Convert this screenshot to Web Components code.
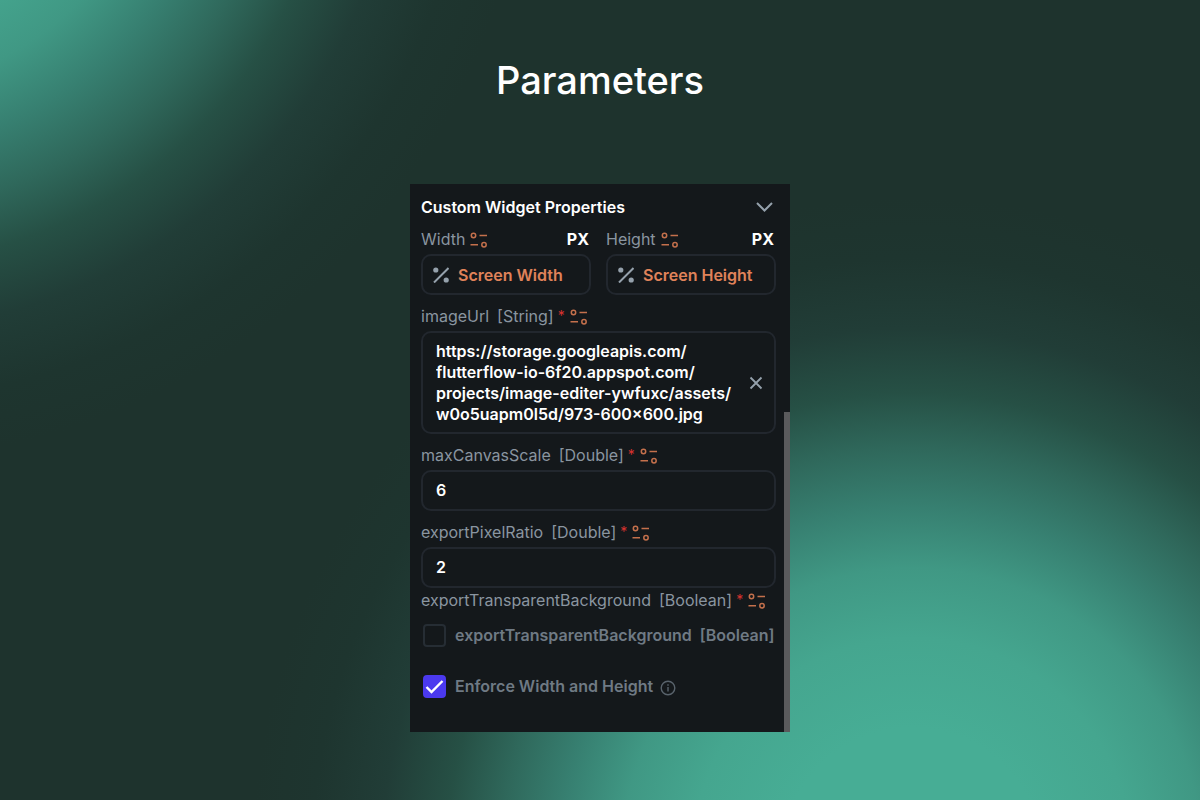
<!DOCTYPE html>
<html lang="en">
<head>
<meta charset="utf-8">
<title>Parameters</title>
<style>
  html, body { margin: 0; min-height: 100%; }
  body { background: #1e332d; font-family: Inter, "Liberation Sans", sans-serif; }
</style>
</head>
<body>
<param-stage>
  <span slot="title">Parameters</span>
  <prop-panel heading="Custom Widget Properties">
    <prop-pair>
      <size-field label="Width" unit="PX">Screen Width</size-field>
      <size-field label="Height" unit="PX">Screen Height</size-field>
    </prop-pair>
    <text-field name="imageUrl" type="String" multiline value="https://storage.googleapis.com/&#10;flutterflow-io-6f20.appspot.com/&#10;projects/image-editer-ywfuxc/assets/&#10;w0o5uapm0l5d/973-600x600.jpg"></text-field>
    <text-field name="maxCanvasScale" type="Double" value="6"></text-field>
    <text-field name="exportPixelRatio" type="Double" value="2"></text-field>
    <prop-label required>exportTransparentBackground<span slot="type">[Boolean]</span></prop-label>
    <check-field label="exportTransparentBackground" type="[Boolean]"></check-field>
    <check-field label="Enforce Width and Height" checked info></check-field>
  </prop-panel>
</param-stage>

<script>
const define = (name, render) => customElements.define(name, class extends HTMLElement {
  connectedCallback() {
    if (this.shadowRoot) return;
    this.attachShadow({ mode: 'open' }).innerHTML = render(this);
  }
});

define('param-stage', () => `
  <style>
    :host {
      --c0: #47ad95; --c1: #45a68f; --c2: #409884; --c3: #378071; --c4: #2f685b;
      --c5: #265045; --c6: #213d37; --c7: #1e352f;
      display: block; box-sizing: border-box; min-height: 100vh; padding: 56px 16px;
      background:
        radial-gradient(circle at -130px -200px, var(--c0) 130px, var(--c1) 220px, var(--c2) 290px, var(--c3) 350px, var(--c4) 410px, var(--c5) 465px, var(--c6) 530px, var(--c7) 600px, transparent 660px),
        radial-gradient(circle at 76% calc(100% + 58px), var(--c0) 130px, var(--c1) 220px, var(--c2) 290px, var(--c3) 350px, var(--c4) 410px, var(--c5) 465px, var(--c6) 530px, var(--c7) 600px, transparent 660px),
        #1e332d;
    }
    main { display: flex; flex-direction: column; align-items: center; gap: 80px; }
    h1 { margin: 0; font-size: 38px; line-height: 48px; font-weight: 500; color: #fff; }
  </style>
  <main><h1><slot name="title"></slot></h1><slot></slot></main>`);

define('prop-panel', el => `
  <style>
    :host { display: block; position: relative; box-sizing: border-box; width: 100%; max-width: 380px;
      padding: 7px 14px 34px 11px; background: #14181b; }
    header { display: flex; align-items: center; justify-content: space-between; height: 32px; margin-bottom: 4px; }
    h2 { margin: 0; font-size: 16px; font-weight: 600; color: #fff; white-space: nowrap; }
    button { border: 0; padding: 0; background: none; display: flex; }
    .body { display: flex; flex-direction: column; }
    .thumb { position: absolute; right: 0; bottom: 0; width: 6px; height: 320px; background: #5a5a5c; }
  </style>
  <header><h2>${el.getAttribute('heading')}</h2>
    <button aria-label="Collapse"><svg width="22" height="16" viewBox="0 0 22 16" fill="none" stroke="#95a1ac" stroke-width="2"><path d="M3 4l7.500 7.500L18 4"/></svg></button>
  </header>
  <div class="body"><slot></slot></div>
  <div class="thumb"></div>`);

define('prop-pair', () => `
  <style>:host { display: grid; grid-template-columns: 1fr 1fr; gap: 15px; }</style><slot></slot>`);

define('bind-icon', () => `
  <style>:host { display: flex; }</style>
  <svg width="18" height="16" viewBox="0 0 18 16" fill="none" stroke="#c4704c" stroke-width="1.500">
    <circle cx="3.500" cy="3.500" r="2.200"/><path d="M9.500 3.500H17M.5 12.800H8"/><circle cx="14" cy="12.800" r="2.200"/>
  </svg>`);

define('prop-label', el => `
  <style>
    :host { display: flex; align-items: center; height: 24px; font-size: 16px; line-height: 24px; color: #8a95a0; white-space: nowrap; }
    ::slotted([slot=type]) { margin-left: 8px; }
    .star { color: #d8322f; margin: 0 5px 0 4px; font-size: 14px; }
    bind-icon { margin-top: 2px; }
    :host(:not([required])) bind-icon { margin-left: 5px; }
  </style>
  <slot></slot><slot name="type"></slot>${el.hasAttribute('required') ? '<span class="star">*</span>' : ''}<bind-icon></bind-icon>`);

define('size-field', el => `
  <style>
    :host { display: block; min-width: 0; }
    .top { display: flex; justify-content: space-between; align-items: center; margin-bottom: 3px; padding-right: 2px; }
    .unit { font-size: 16px; font-weight: 700; color: #fff; }
    button { box-sizing: border-box; display: flex; align-items: center; gap: 9px; width: 100%; height: 41px; padding: 0 10px;
      border: 2px solid #22272e; border-radius: 10px; background: #14181b; font: 600 16px Inter, sans-serif; color: #e0835a; white-space: nowrap; }
  </style>
  <div class="top"><prop-label>${el.getAttribute('label')}</prop-label><span class="unit">${el.getAttribute('unit')}</span></div>
  <button aria-label="${el.getAttribute('label')}">
    <svg width="16" height="16" viewBox="0 0 16 16" fill="#95a1ac"><circle cx="2.800" cy="3" r="2.600"/><circle cx="13.200" cy="13" r="2.600"/><path d="M1 15.500L15.500 1" stroke="#95a1ac" stroke-width="2"/></svg>
    <slot></slot></button>`);

define('text-field', el => {
  const value = el.getAttribute('value');
  const multi = el.hasAttribute('multiline');
  return `
  <style>
    :host { display: block; margin-top: 9px; }
    label { display: block; margin-bottom: 3px; }
    .box { box-sizing: border-box; display: flex; align-items: center; min-height: 41px; padding: 0 11px 0 13px;
      border: 2px solid #22272e; border-radius: 10px; }
    .multi { padding-top: 8px; padding-bottom: 7px; }
    input, textarea { flex: 1; min-width: 0; padding: 0; border: 0; outline: 0; background: none; resize: none; overflow: hidden;
      color: #fff; font: 600 16px/21px Inter, sans-serif; white-space: pre; display: block; }
    textarea { height: 84px; font-size: 16px; }
    button { border: 0; padding: 0; background: none; display: flex; }
  </style>
  <label for="field"><prop-label required>${el.getAttribute('name')}<span slot="type">[${el.getAttribute('type')}]</span></prop-label></label>
  <div class="box ${multi ? 'multi' : ''}">${multi
    ? `<textarea id="field" rows="4" spellcheck="false">${value}</textarea><button aria-label="Clear"><svg width="14" height="14" viewBox="0 0 14 14" stroke="#95a1ac" stroke-width="1.800"><path d="M1.500 1.500l11 11M12.500 1.500l-11 11"/></svg></button>`
    : `<input id="field" value="${value}">`}</div>`;
});

define('check-field', el => `
  <style>
    :host { display: flex; align-items: center; height: 23px; margin-top: 12px; padding-left: 2px; }
    :host([checked]) { margin-top: 28px; }
    .tick { position: relative; display: flex; }
    input { appearance: none; box-sizing: border-box; width: 23px; height: 23px; margin: 0; border: 2px solid #262d34; border-radius: 4px; }
    input:checked { border-color: #4b39ef; background: #4b39ef; }
    .tick svg { position: absolute; inset: 0; pointer-events: none; }
    input:not(:checked) + svg { display: none; }
    label { margin-left: 9px; font-size: 16px; line-height: 23px; font-weight: 600; color: #6f7a84; white-space: nowrap; }
    label span { margin-left: 8px; }
    .info { margin: 2px 0 0 7px; }
  </style>
  <span class="tick"><input type="checkbox" id="box" ${el.hasAttribute('checked') ? 'checked' : ''}>
  <svg width="23" height="23" viewBox="0 0 23 23" fill="none" stroke="#fff" stroke-width="2.400"><path d="M3.500 12l5 5L19.500 6"/></svg></span>
  <label for="box">${el.getAttribute('label')}${el.hasAttribute('type') ? `<span>${el.getAttribute('type')}</span>` : ''}</label>
  ${el.hasAttribute('info') ? '<svg class="info" width="16" height="16" viewBox="0 0 16 16" fill="none" stroke="#59636c" stroke-width="1.400"><circle cx="8" cy="8" r="6.800"/><path d="M8 7v4.500M8 4.300v1.500"/></svg>' : ''}`);
</script>
</body>
</html>
